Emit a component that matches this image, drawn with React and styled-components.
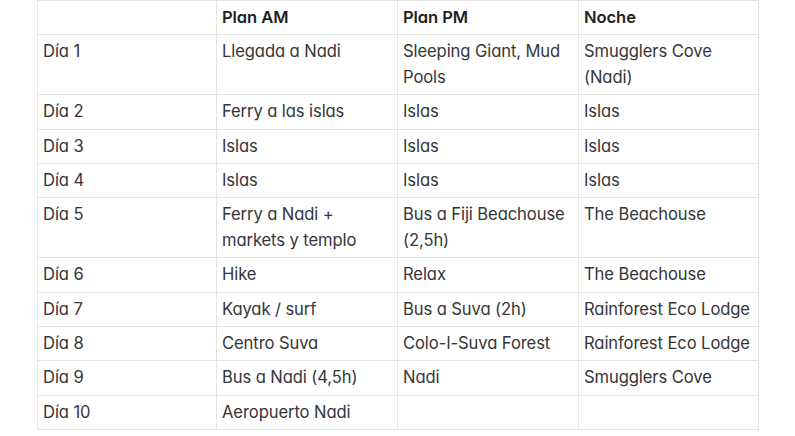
import React from "react";
import styled, { createGlobalStyle } from "styled-components";

const Global = createGlobalStyle`
  html, body { margin: 0; padding: 0; background: #ffffff; }
  body { font-family: Inter, "Noto Sans", sans-serif; }
`;

const Page = styled.div`
  display: flex;
  justify-content: flex-start;
  padding: 0 0 0 37px;
`;

const Table = styled.table`
  border-collapse: collapse;
  table-layout: fixed;
  width: 721px;
  font-family: Inter, "Noto Sans", sans-serif;
  font-feature-settings: "cv11" 1;
  font-size: 16.6px;
  line-height: 25.4px;
  color: #363638;
`;

const Col = styled.col`
  width: ${(p) => p.$w}px;
`;

const Cell = styled.td`
  border: 1px solid #e4e4e4;
  padding: 4px 5px 4px 5px;
  vertical-align: top;
  text-align: left;
  font-weight: 400;
  letter-spacing: -0.1px;
`;

const HeadCell = styled(Cell).attrs({ as: "th" })`
  font-weight: 600;
  color: #1f1f21;
`;

const header = ["", "Plan AM", "Plan PM", "Noche"];
const rows = [
  ["Día 1", "Llegada a Nadi", "Sleeping Giant, Mud Pools", "Smugglers Cove (Nadi)"],
  ["Día 2", "Ferry a las islas", "Islas", "Islas"],
  ["Día 3", "Islas", "Islas", "Islas"],
  ["Día 4", "Islas", "Islas", "Islas"],
  ["Día 5", "Ferry a Nadi + markets y templo", "Bus a Fiji Beachouse (2,5h)", "The Beachouse"],
  ["Día 6", "Hike", "Relax", "The Beachouse"],
  ["Día 7", "Kayak / surf", "Bus a Suva (2h)", "Rainforest Eco Lodge"],
  ["Día 8", "Centro Suva", "Colo-I-Suva Forest", "Rainforest Eco Lodge"],
  ["Día 9", "Bus a Nadi (4,5h)", "Nadi", "Smugglers Cove"],
  ["Día 10", "Aeropuerto Nadi", "", ""],
];

export default function App() {
  return (
    <>
      <Global />
      <Page>
        <Table>
          <colgroup>
            <Col $w={179} />
            <Col $w={181} />
            <Col $w={181} />
            <Col $w={180} />
          </colgroup>
          <thead>
            <tr>
              {header.map((h, i) => (
                <HeadCell key={i}>{h}</HeadCell>
              ))}
            </tr>
          </thead>
          <tbody>
            {rows.map((r, i) => (
              <tr key={i}>
                {r.map((c, j) => (
                  <Cell key={j}>{c}</Cell>
                ))}
              </tr>
            ))}
          </tbody>
        </Table>
      </Page>
    </>
  );
}
